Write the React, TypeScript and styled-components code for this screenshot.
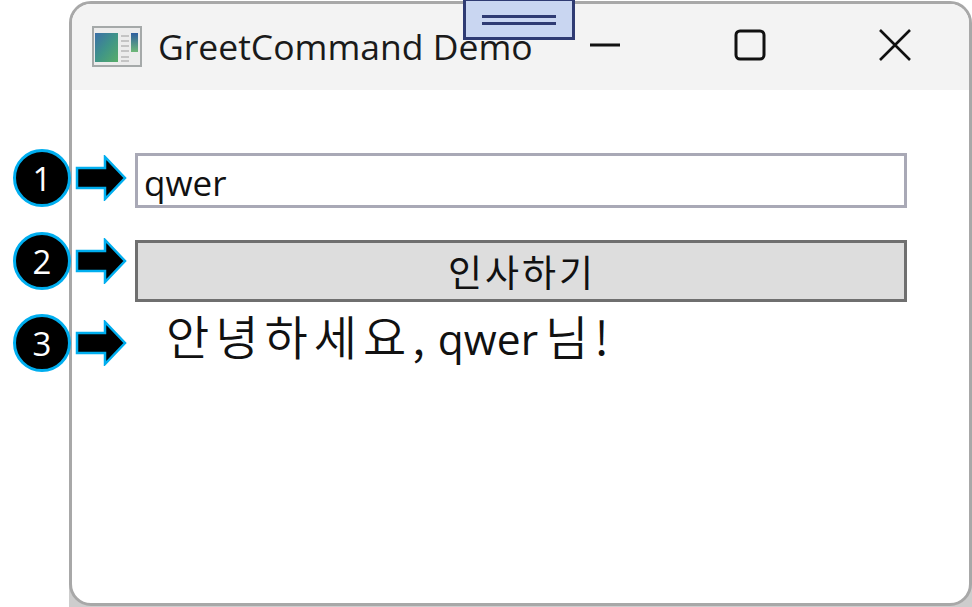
import React from 'react';
import styled, { createGlobalStyle } from 'styled-components';

const SANS = `"Open Sans", "Noto Sans", "Noto Sans CJK KR", sans-serif`;
const KOREAN = `"Noto Sans CJK KR", "Noto Sans", sans-serif`;

const GlobalStyle = createGlobalStyle`
  html, body {
    margin: 0;
    padding: 0;
    background: #fff;
  }
  #root {
    width: 972px;
    height: 607px;
    overflow: hidden;
  }
`;

const Page = styled.div`
  position: relative;
  width: 972px;
  height: 607px;
  padding-left: 69px;
  box-sizing: border-box;
`;
const Backdrop = styled.div`
  height: 607px;
  padding-top: 1px;
  box-sizing: border-box;
  background: linear-gradient(#fff 0, #fff 570px, #cdcdcd 570px);
`;
const Window = styled.div`
  height: 605px;
  border: 3px solid #a8a8a8;
  border-radius: 22px;
  box-sizing: border-box;
  background: #fff;
  overflow: hidden;
`;
const TitleBar = styled.div`
  display: flex;
  align-items: center;
  height: 86px;
  padding: 0 0 0 20px;
  background: #f3f3f3;
`;
const AppIcon = styled.svg`
  flex: none;
  width: 50px;
  height: 42px;
  margin: 0 16px 0 0;
`;
const Title = styled.div`
  margin-top: -3px;
  font-family: ${SANS};
  font-size: 35.5px;
  color: #1a1a1a;
  white-space: nowrap;
`;
const Controls = styled.div`
  display: flex;
  margin-left: auto;
`;
const Control = styled.div`
  display: flex;
  align-items: center;
  justify-content: center;
  width: 145px;
  height: 86px;
  padding: 0 4px 4px 0;
  box-sizing: border-box;
`;
const Form = styled.div`
  display: flex;
  flex-direction: column;
  padding: 63px 62px 0 63px;
`;
const NameInput = styled.input`
  height: 55px;
  margin: 0 0 32px;
  padding: 3px 6px 0;
  border: 3px solid #a9a9b6;
  box-sizing: border-box;
  outline: none;
  font-family: ${SANS};
  font-size: 35px;
  color: #111;
`;
const GreetButton = styled.button`
  height: 62px;
  margin: 0 0 4px;
  padding: 0 0 0 2px;
  border: 3px solid #6f6f6f;
  background: #dddddd;
  font-family: ${KOREAN};
  font-size: 37px;
  letter-spacing: 3px;
  color: #111;
`;
const Greeting = styled.div`
  padding-left: 31px;
  font-family: ${KOREAN};
  font-size: 47px;
  font-weight: 350;
  line-height: 57px;
  letter-spacing: 6px;
  color: #111;
  white-space: nowrap;
`;
const Latin = styled.span`
  font-family: ${SANS};
  font-size: 42.5px;
  font-weight: 400;
  letter-spacing: 0;
  margin: 0 7px;
`;

/* Handle drawn over the top of the screenshot */
const Handle = styled.div`
  position: absolute;
  left: 463px;
  top: -2px;
  width: 112px;
  height: 42px;
  display: flex;
  flex-direction: column;
  justify-content: center;
  align-items: center;
  gap: 4px;
  padding-top: 1px;
  border: 3px solid #2f3b73;
  background: #c9d6f1;
  box-sizing: border-box;
`;
const HandleLine = styled.div`
  width: 74px;
  height: 3px;
  background: #2f3b73;
`;

/* Numbered callouts lying over the left edge of the window */
const Callout = styled.div<{ $top: number }>`
  position: absolute;
  left: 13px;
  top: ${(p) => p.$top}px;
  display: flex;
  align-items: center;
  gap: 4px;
`;
const Badge = styled.div`
  display: flex;
  align-items: center;
  justify-content: center;
  width: 58px;
  height: 58px;
  border: 3.5px solid #00aeef;
  border-radius: 50%;
  box-sizing: border-box;
  background: #000;
  font-family: ${SANS};
  font-size: 33px;
  color: #fff;
`;
const Arrow = styled.svg`
  flex: none;
  width: 52px;
  height: 46px;
`;

const callouts = [
  { label: '1', top: 149 },
  { label: '2', top: 232 },
  { label: '3', top: 314 },
];

export default function App() {
  return (
    <Page>
      <GlobalStyle />
      <Backdrop>
        <Window>
          <TitleBar>
            <AppIcon viewBox="0 0 50 42">
              <defs>
                <linearGradient id="pane" x1="0" y1="0" x2="1" y2="1">
                  <stop offset="0" stopColor="#3b6fa8" />
                  <stop offset="0.5" stopColor="#3f9488" />
                  <stop offset="1" stopColor="#58ad68" />
                </linearGradient>
                <linearGradient id="side" x1="0" y1="0" x2="0" y2="1">
                  <stop offset="0" stopColor="#2f5f9f" />
                  <stop offset="1" stopColor="#6fb878" />
                </linearGradient>
              </defs>
              <rect x="1" y="1" width="48" height="39" fill="#ececec" stroke="#a5a9a9" strokeWidth="2" />
              <rect x="3" y="7" width="23" height="29" fill="url(#pane)" />
              <rect x="29" y="9" width="8" height="2" fill="#c4c4c4" />
              <rect x="29" y="14" width="8" height="2" fill="#c4c4c4" />
              <rect x="29" y="19" width="8" height="2" fill="#c4c4c4" />
              <rect x="29" y="24" width="8" height="2" fill="#c4c4c4" />
              <rect x="29" y="30" width="8" height="2" fill="#c4c4c4" />
              <rect x="29" y="34" width="8" height="2" fill="#c4c4c4" />
              <rect x="39" y="7" width="7" height="19" fill="url(#side)" />
            </AppIcon>
            <Title>GreetCommand Demo</Title>
            <Controls>
              <Control>
                <svg width="32" height="32" viewBox="0 0 32 32">
                  <path d="M1 16H31" stroke="#111" strokeWidth="3" fill="none" />
                </svg>
              </Control>
              <Control>
                <svg width="32" height="32" viewBox="0 0 32 32">
                  <rect x="2" y="2" width="28" height="28" rx="4" stroke="#111" strokeWidth="3" fill="none" />
                </svg>
              </Control>
              <Control>
                <svg width="32" height="32" viewBox="0 0 32 32">
                  <path d="M1 1L31 31M31 1L1 31" stroke="#111" strokeWidth="2.6" fill="none" />
                </svg>
              </Control>
            </Controls>
          </TitleBar>
          <Form>
            <NameInput defaultValue="qwer" />
            <GreetButton>인사하기</GreetButton>
            <Greeting>안녕하세요,<Latin>qwer</Latin>님!</Greeting>
          </Form>
        </Window>
      </Backdrop>
      <Handle>
        <HandleLine />
        <HandleLine />
      </Handle>
      {callouts.map((c) => (
        <Callout key={c.label} $top={c.top}>
          <Badge>{c.label}</Badge>
          <Arrow viewBox="0 0 52 46">
            <path
              d="M2 13H30V2L50 23L30 44V33H2Z"
              fill="#000"
              stroke="#00aeef"
              strokeWidth="2.5"
            />
          </Arrow>
        </Callout>
      ))}
    </Page>
  );
}
